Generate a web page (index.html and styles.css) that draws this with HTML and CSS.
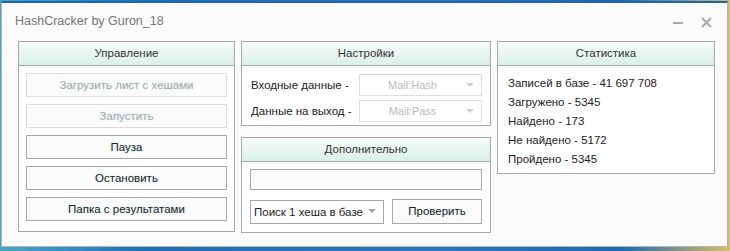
FILE: index.html
```html
<!DOCTYPE html>
<html lang="ru">
<head>
  <meta charset="UTF-8" />
  <title>HashCracker by Guron_18</title>
  <link rel="stylesheet" href="styles.css">
</head>
<body>
  <div class="window">
    <!-- Title bar -->
    <div class="titlebar">
      <span class="title">HashCracker by Guron_18</span>
      <span class="controls">
        <span class="ctl min"></span>
        <svg class="ctl close" width="11" height="11" viewBox="0 0 11 11">
          <path d="M1 1 L10 10 M10 1 L1 10" stroke="#a8a8a8" stroke-width="2"/>
        </svg>
      </span>
    </div>

    <div class="content">
      <!-- Управление -->
      <div class="panel col1">
        <div class="panel-head">Управление</div>
        <div class="panel-body buttons">
          <div class="btn disabled">Загрузить лист с хешами</div>
          <div class="btn disabled">Запустить</div>
          <div class="btn">Пауза</div>
          <div class="btn">Остановить</div>
          <div class="btn">Папка с результатами</div>
        </div>
      </div>

      <div class="col2">
        <!-- Настройки -->
        <div class="panel settings">
          <div class="panel-head">Настройки</div>
          <div class="panel-body form">
            <div class="row">
              <span class="label">Входные данные -</span>
              <div class="combo disabled"><span>Mail:Hash</span><i class="arrow"></i></div>
            </div>
            <div class="row">
              <span class="label">Данные на выход -</span>
              <div class="combo disabled"><span>Mail:Pass</span><i class="arrow"></i></div>
            </div>
          </div>
        </div>

        <!-- Дополнительно -->
        <div class="panel extra">
          <div class="panel-head">Дополнительно</div>
          <div class="panel-body extra-body">
            <div class="textbox"></div>
            <div class="row">
              <div class="combo search"><span>Поиск 1 хеша в базе</span><i class="arrow"></i></div>
              <div class="btn check">Проверить</div>
            </div>
          </div>
        </div>
      </div>

      <!-- Статистика -->
      <div class="panel stats">
        <div class="panel-head">Статистика</div>
        <div class="panel-body stat-list">
          <div>Записей в базе - 41 697 708</div>
          <div>Загружено - 5345</div>
          <div>Найдено - 173</div>
          <div>Не найдено - 5172</div>
          <div>Пройдено - 5345</div>
        </div>
      </div>
    </div>
  </div>
</body>
</html>
```

FILE: styles.css
```css
html, body { margin:0; padding:0; }
body {
  width:730px;
  height:251px;
  overflow:hidden;
  background: linear-gradient(90deg, #4aa6c8 0%, #1f6fb8 20%, #2a78c0 60%, #1c6ab2 85%, #d8c060 100%);
  font-family:"Liberation Sans", "DejaVu Sans", sans-serif;
  font-size:11px;
  color:#222;
}
.window {
  margin:1px 0 0 1px;
  width:727px;
  height:246px;
  background:#fbfbfb;
  border:1px solid #b4b4b4;
  border-top:2px solid #1f64b0;
  box-sizing:border-box;
}
/* Title bar */
.titlebar {
  height:38px;
  display:flex;
  align-items:center;
  justify-content:space-between;
  padding:0 15px 0 13px;
  box-sizing:border-box;
}
.title { font-size:12.5px; color:#777; padding-bottom:2px; }
.controls { display:flex; align-items:center; gap:18px; }
.ctl.min { width:10px; height:2px; background:#a8a8a8; margin-top:2px; }
/* Panels */
.content {
  display:flex;
  gap:6px;
  padding:0 0 0 16px;
  align-items:flex-start;
}
.panel {
  border:1px solid #a8a8a8;
  background:#fff;
  box-sizing:border-box;
}
.panel-head {
  height:24px;
  line-height:23px;
  font-size:11.5px;
  text-align:center;
  color:#333;
  border-bottom:1px solid #a8a8a8;
  background:linear-gradient(#f6fcfa, #d9f0e9);
  box-sizing:border-box;
}
.col1 { width:217px; height:191px; }
.col2 { width:250px; display:flex; flex-direction:column; gap:11px; }
.stats { width:218px; height:133px; }
/* Buttons */
.buttons {
  display:flex;
  flex-direction:column;
  gap:7px;
  padding:7px 7px 0 7px;
}
.btn {
  height:24px;
  line-height:22px;
  border:1px solid #a8a8a8;
  text-align:center;
  font-size:11.5px;
  color:#222;
  background:#fbfbfb;
  box-sizing:border-box;
  text-shadow:0 0 3px #c8f0ec;
}
.btn.disabled {
  border-color:#dcdcdc;
  color:#a8a8a8;
}
/* Settings */
.settings { height:85px; }
.form { padding:8px 8px 0 9px; display:flex; flex-direction:column; gap:4px; }
.row { display:flex; align-items:center; justify-content:space-between; }
.label { color:#222; font-size:11.5px; }
.combo {
  position:relative;
  width:123px;
  height:22px;
  border:1px solid #a8a8a8;
  box-sizing:border-box;
  background:#fff;
  display:flex;
  align-items:center;
  justify-content:center;
  padding-right:20px;
  padding-left:4px;
  white-space:nowrap;
}
.combo.disabled { border-color:#dcdcdc; color:#bbb; }
.arrow {
  position:absolute;
  right:7px;
  top:8px;
  width:0; height:0;
  border-left:4px solid transparent;
  border-right:4px solid transparent;
  border-top:4px solid #a0a0a0;
}
.combo.disabled .arrow { border-top-color:#cfcfcf; }
/* Extra */
.extra { height:96px; }
.extra-body { padding:7px 8px 0 8px; display:flex; flex-direction:column; gap:9px; }
.textbox { height:21px; border:1px solid #a8a8a8; background:#fbfbfb; box-sizing:border-box; }
.combo.search {
  width:134px;
  height:24px;
  justify-content:flex-start;
  padding-left:3px;
  font-size:11.5px;
  color:#222;
}
.btn.check { width:90px; height:25px; line-height:23px; }
/* Stats */
.stat-list {
  padding:8px 10px 0 10px;
  line-height:19px;
  font-size:11.5px;
  color:#222;
}
```
